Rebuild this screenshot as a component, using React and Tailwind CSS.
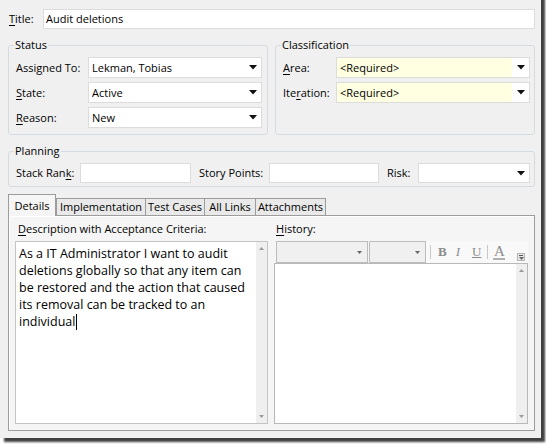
import { Fragment } from "react";

function Key({ children }) {
  return <span className="underline decoration-1 underline-offset-[2px]">{children}</span>;
}

function Arrow() {
  return (
    <svg width="8" height="5" viewBox="0 0 8 5">
      <polygon points="0,0 8,0 4,4.5" fill="#111" />
    </svg>
  );
}

function SmallArrow() {
  return (
    <svg width="5" height="3" viewBox="0 0 5 3">
      <polygon points="0,0 5,0 2.5,3" fill="#666" />
    </svg>
  );
}

function Select({ value, className, required }) {
  return (
    <div className={`flex items-stretch border border-[#dcdcdc] bg-white ${className}`}>
      <div className={`flex flex-1 items-center pl-[3px] ${required ? "bg-[#ffffe1]" : ""}`}>{value}</div>
      <div className="flex w-[17px] items-center justify-center">
        <Arrow />
      </div>
    </div>
  );
}

function Field({ label, children, labelWidth }) {
  return (
    <div className="flex h-[21px] items-center">
      <div className={labelWidth}>{label}</div>
      {children}
    </div>
  );
}

function Scrollbar() {
  return (
    <div className="flex w-[11px] flex-col items-center justify-between bg-[#efefef] py-[5px]">
      <svg width="5" height="3" viewBox="0 0 5 3">
        <polygon points="0,3 5,3 2.5,0" fill="#9a9a9a" />
      </svg>
      <svg width="5" height="3" viewBox="0 0 5 3">
        <polygon points="0,0 5,0 2.5,3" fill="#9a9a9a" />
      </svg>
    </div>
  );
}

const tabs = [
  { name: "Details", width: "w-[48px]" },
  { name: "Implementation", width: "w-[90px]" },
  { name: "Test Cases", width: "w-[60px]" },
  { name: "All Links", width: "w-[52px]" },
  { name: "Attachments", width: "w-[71px]" },
];

const description = [
  "As a IT Administrator I want to audit",
  "deletions globally so that any item can",
  "be restored and the action that caused",
  "its removal can be tracked to an",
  "individual",
];

export default function App() {
  return (
    <div className="h-[444px] w-[546px] overflow-hidden bg-white">
      <div className="-mt-[6px] h-[444px] w-[541px] bg-[#f0f0f0] pl-[8px] pr-[6px] pt-[15px] font-['Open_Sans',sans-serif] text-[11px] leading-[16px] text-black shadow-[4px_4px_2px_rgba(0,0,0,0.75)]">
        {/* Title */}
        <div className="flex h-[20px] items-center">
          <div className="w-[35px] pl-[1px]">
            <Key>T</Key>itle:
          </div>
          <div className="flex h-[20px] flex-1 items-center border border-[#dcdcdc] bg-white pl-[2px]">
            Audit deletions
          </div>
        </div>

        {/* Status + Classification */}
        <div className="mt-[8px] flex gap-[7px]">
          <fieldset className="w-[260px] rounded-[3px] border border-[#d5dbe0] pb-[6px] pl-[7px] pr-[5px] pt-[4px]">
            <legend className="-ml-[2px] px-[1px]">Status</legend>
            <div className="flex flex-col gap-[4px]">
              <Field label={<>Assi<Key>g</Key>ned To:</>} labelWidth="w-[72px]">
                <Select value="Lekman, Tobias" className="h-[21px] w-[174px]" />
              </Field>
              <Field label={<><Key>S</Key>tate:</>} labelWidth="w-[72px]">
                <Select value="Active" className="h-[21px] w-[174px]" />
              </Field>
              <Field label={<><Key>R</Key>eason:</>} labelWidth="w-[72px]">
                <Select value="New" className="h-[21px] w-[174px]" />
              </Field>
            </div>
          </fieldset>
          <fieldset className="w-[260px] rounded-[3px] border border-[#d5dbe0] pb-[6px] pl-[7px] pr-[4px] pt-[4px]">
            <legend className="-ml-[2px] px-[1px]">Classification</legend>
            <div className="flex flex-col gap-[4px]">
              <Field label={<><Key>A</Key>rea:</>} labelWidth="w-[53px]">
                <Select value="<Required>" className="h-[21px] w-[194px]" required />
              </Field>
              <Field label={<>Ite<Key>r</Key>ation:</>} labelWidth="w-[53px]">
                <Select value="<Required>" className="h-[21px] w-[194px]" required />
              </Field>
            </div>
          </fieldset>
        </div>

        {/* Planning */}
        <fieldset className="mt-[8px] rounded-[3px] border border-[#d5dbe0] pb-[3px] pl-[7px] pr-[4px] pt-[4px]">
          <legend className="-ml-[2px] px-[1px]">Planning</legend>
          <div className="flex h-[20px] items-center">
            <div className="w-[64px]">
              Stack Ran<Key>k</Key>:
            </div>
            <div className="h-[20px] w-[111px] border border-[#dcdcdc] bg-white" />
            <div className="w-[78px] pl-[8px]">Story Points:</div>
            <div className="h-[20px] w-[110px] border border-[#dcdcdc] bg-white" />
            <div className="w-[39px] pl-[8px]">Risk:</div>
            <Select value="" className="h-[20px] w-[112px]" />
          </div>
        </fieldset>

        {/* Tabs */}
        <div className="mt-[7px] flex h-[21px] items-end">
          {tabs.map((tab, i) =>
            i === 0 ? (
              <div
                key={tab.name}
                className={`relative z-10 -mb-[1px] flex h-[22px] items-start justify-center border border-b-0 border-[#9c9c9c] bg-[#f5f5f5] pt-[3px] ${tab.width}`}
              >
                {tab.name}
              </div>
            ) : (
              <div
                key={tab.name}
                className={`flex h-[17px] items-center justify-center border border-b-0 border-[#9c9c9c] bg-[#e9e9e9] ${tab.width} ${i === 1 ? "ml-0" : "-ml-[1px]"}`}
              >
                {tab.name}
              </div>
            )
          )}
        </div>

        {/* Panel */}
        <div className="flex h-[216px] w-[527px] gap-[6px] border border-[#9c9c9c] bg-[#f5f5f5] pl-[6px] pt-[5px] shadow-[inset_1px_1px_0_#ffffff]">
          <div className="flex w-[253px] flex-col">
            <div className="h-[16px] pl-[3px]">
              <Key>D</Key>escription with Acceptance Criteria:
            </div>
            <div className="mt-[4px] flex h-[183px] border border-[#c4c4c4] bg-white">
              <div className="flex-1 pl-[3px] pt-[3px] text-[12.5px] leading-[17px]">
                {description.map((line, i) => (
                  <Fragment key={i}>
                    <div className="flex items-center">
                      {line}
                      {i === description.length - 1 ? (
                        <span className="ml-[1px] inline-block h-[16px] w-[1px] bg-black" />
                      ) : null}
                    </div>
                  </Fragment>
                ))}
              </div>
              <Scrollbar />
            </div>
          </div>

          <div className="flex w-[254px] flex-col">
            <div className="h-[16px] pl-[2px]">
              <Key>H</Key>istory:
            </div>
            <div className="mt-[4px] flex h-[22px] items-stretch pl-[2px]">
              <div className="flex w-[92px] items-center justify-end border border-[#bcbcbc] bg-[#f0f0f0] pr-[5px]">
                <SmallArrow />
              </div>
              <div className="ml-[1px] flex w-[57px] items-center justify-end border border-[#bcbcbc] bg-[#f0f0f0] pr-[5px]">
                <SmallArrow />
              </div>
              <div className="flex flex-1 items-center bg-[#f9f9f9] pl-[4px] font-['Liberation_Serif',serif] text-[13px] text-[#8c8c8c]">
                <div className="h-[14px] w-[1px] bg-[#c8c8c8]" />
                <span className="ml-[7px] font-bold">B</span>
                <span className="ml-[9px] italic">I</span>
                <span className="ml-[12px] underline">U</span>
                <div className="ml-[6px] h-[14px] w-[1px] bg-[#c8c8c8]" />
                <div className="ml-[5px] flex flex-col items-center">
                  <span className="text-[15px] leading-[13px]">A</span>
                  <span className="h-[2px] w-[12px] bg-[#b0b0b0]" />
                </div>
                <div className="ml-auto mr-[3px] mt-[10px] flex h-[8px] w-[8px] flex-col items-center justify-center gap-[1px] border border-[#b5b5b5] bg-[#e8e8e8]">
                  <span className="h-[1px] w-[4px] bg-[#555]" />
                  <SmallArrow />
                </div>
              </div>
            </div>
            <div className="flex h-[161px] border border-[#b8b8b8] bg-white">
              <div className="flex-1" />
              <Scrollbar />
            </div>
          </div>
        </div>
      </div>
    </div>
  );
}
